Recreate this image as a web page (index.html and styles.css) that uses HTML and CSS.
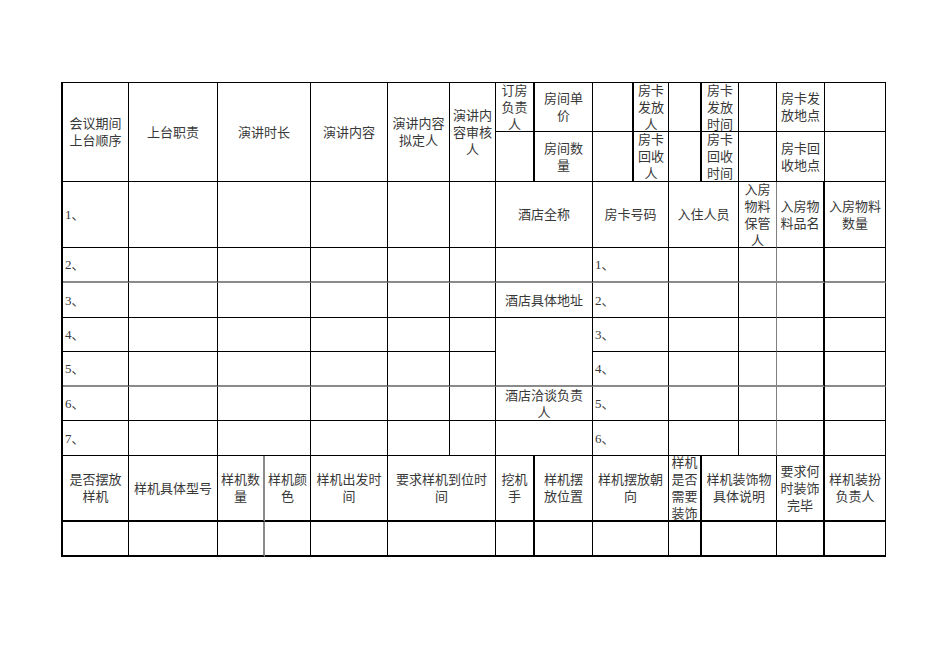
FILE: index.html
```html
<!DOCTYPE html>
<html lang="zh">
<head>
<meta charset="utf-8">
<title>会议安排表</title>
<link rel="stylesheet" href="styles.css">
</head>
<body>
<div class="sheet">
  <!-- row 1 -->
  <div class="cell h2">会议期间<br>上台顺序</div>
  <div class="cell h2">上台职责</div>
  <div class="cell h2 w2">演讲时长</div>
  <div class="cell h2">演讲内容</div>
  <div class="cell h2">演讲内容<br>拟定人</div>
  <div class="cell h2">演讲内<br>容审核<br>人</div>
  <div class="cell tr">订房<br>负责<br>人</div>
  <div class="cell">房间单<br>价</div>
  <div class="cell tr"></div>
  <div class="cell">房卡<br>发放<br>人</div>
  <div class="cell tr"></div>
  <div class="cell">房卡<br>发放<br>时间</div>
  <div class="cell"></div>
  <div class="cell">房卡发<br>放地点</div>
  <div class="cell"></div>
  <!-- row 2 -->
  <div class="cell tr"></div>
  <div class="cell">房间数<br>量</div>
  <div class="cell tr"></div>
  <div class="cell">房卡<br>回收<br>人</div>
  <div class="cell tr"></div>
  <div class="cell">房卡<br>回收<br>时间</div>
  <div class="cell"></div>
  <div class="cell">房卡回<br>收地点</div>
  <div class="cell"></div>
  <!-- row 3 -->
  <div class="cell num">1、</div>
  <div class="cell"></div>
  <div class="cell w2"></div>
  <div class="cell"></div>
  <div class="cell"></div>
  <div class="cell"></div>
  <div class="cell w2">酒店全称</div>
  <div class="cell w2">房卡号码</div>
  <div class="cell w2">入住人员</div>
  <div class="cell gr">入房<br>物料<br>保管<br>人</div>
  <div class="cell tr">入房物<br>料品名</div>
  <div class="cell">入房物料<br>数量</div>
  <!-- row 4 -->
  <div class="cell num gb">2、</div>
  <div class="cell gb"></div>
  <div class="cell w2 gb"></div>
  <div class="cell gb"></div>
  <div class="cell gb"></div>
  <div class="cell gb"></div>
  <div class="cell w2 gb"></div>
  <div class="cell w2 num gb">1、</div>
  <div class="cell w2 gb"></div>
  <div class="cell gr gb"></div>
  <div class="cell tr gb"></div>
  <div class="cell gb"></div>
  <!-- row 5 -->
  <div class="cell num">3、</div>
  <div class="cell"></div>
  <div class="cell w2"></div>
  <div class="cell"></div>
  <div class="cell"></div>
  <div class="cell"></div>
  <div class="cell w2">酒店具体地址</div>
  <div class="cell w2 num">2、</div>
  <div class="cell w2"></div>
  <div class="cell gr"></div>
  <div class="cell tr"></div>
  <div class="cell"></div>
  <!-- row 6 -->
  <div class="cell num">4、</div>
  <div class="cell"></div>
  <div class="cell w2"></div>
  <div class="cell"></div>
  <div class="cell"></div>
  <div class="cell"></div>
  <div class="cell w2 h2 gb"></div>
  <div class="cell w2 num">3、</div>
  <div class="cell w2"></div>
  <div class="cell gr"></div>
  <div class="cell tr"></div>
  <div class="cell"></div>
  <!-- row 7 -->
  <div class="cell num gb">5、</div>
  <div class="cell gb"></div>
  <div class="cell w2 gb"></div>
  <div class="cell gb"></div>
  <div class="cell gb"></div>
  <div class="cell gb"></div>
  <div class="cell w2 num gb">4、</div>
  <div class="cell w2 gb"></div>
  <div class="cell gr gb"></div>
  <div class="cell tr gb"></div>
  <div class="cell gb"></div>
  <!-- row 8 -->
  <div class="cell num">6、</div>
  <div class="cell"></div>
  <div class="cell w2"></div>
  <div class="cell"></div>
  <div class="cell"></div>
  <div class="cell"></div>
  <div class="cell w2">酒店洽谈负责<br>人</div>
  <div class="cell w2 num">5、</div>
  <div class="cell w2"></div>
  <div class="cell gr"></div>
  <div class="cell tr"></div>
  <div class="cell"></div>
  <!-- row 9 -->
  <div class="cell num">7、</div>
  <div class="cell"></div>
  <div class="cell w2"></div>
  <div class="cell"></div>
  <div class="cell"></div>
  <div class="cell"></div>
  <div class="cell w2"></div>
  <div class="cell w2 num">6、</div>
  <div class="cell w2"></div>
  <div class="cell gr"></div>
  <div class="cell tr"></div>
  <div class="cell"></div>
  <!-- row 10 -->
  <div class="cell tb">是否摆放<br>样机</div>
  <div class="cell tb">样机具体型号</div>
  <div class="cell tb gv">样机数<br>量</div>
  <div class="cell tb">样机颜<br>色</div>
  <div class="cell tb">样机出发时<br>间</div>
  <div class="cell tb w2">要求样机到位时<br>间</div>
  <div class="cell tb tr">挖机<br>手</div>
  <div class="cell tb">样机摆<br>放位置</div>
  <div class="cell tb w2">样机摆放朝<br>向</div>
  <div class="cell tb tr">样机<br>是否<br>需要<br>装饰</div>
  <div class="cell tb w2">样机装饰物<br>具体说明</div>
  <div class="cell tb tr">要求何<br>时装饰<br>完毕</div>
  <div class="cell tb">样机装扮<br>负责人</div>
  <!-- row 11 -->
  <div class="cell tb"></div>
  <div class="cell tb"></div>
  <div class="cell tb gv"></div>
  <div class="cell tb"></div>
  <div class="cell tb"></div>
  <div class="cell tb w2"></div>
  <div class="cell tb tr"></div>
  <div class="cell tb"></div>
  <div class="cell tb w2"></div>
  <div class="cell tb tr"></div>
  <div class="cell tb w2"></div>
  <div class="cell tb tr"></div>
  <div class="cell tb"></div>
</div>
</body>
</html>
```

FILE: styles.css
```css
html, body {
  margin: 0;
  padding: 0;
  background: #ffffff;
}

.sheet {
  display: grid;
  grid-template-columns: 66px 89px 47px 46px 77px 62px 46px 39px 58px 41px 35px 33px 37px 38px 48px 61px;
  grid-template-rows: 49px 50px 66px 35px 35px 34px 35px 34px 35px 66px 35px;
  width: max-content;
  margin: 82px 0 0 61px;
  border-top: 1px solid #000;
  border-left: 2px solid #000;
  font-family: "Liberation Serif", "Noto Sans CJK SC", serif;
  font-size: 13px;
  line-height: 17px;
  color: #383838;
}

.cell {
  box-sizing: border-box;
  border-right: 1px solid #000;
  border-bottom: 1px solid #000;
  display: flex;
  align-items: center;
  justify-content: center;
  text-align: center;
  white-space: nowrap;
  overflow: visible;
}

.num {
  justify-content: flex-start;
  text-align: left;
  padding-left: 2px;
}

.w2 { grid-column: span 2; }
.h2 { grid-row: span 2; }

.tr { border-right-width: 2px; }

.gr { border-right: 1px solid #7f7f7f; }

.gb { border-bottom: 2px solid #8a8a8a; }

.gv { border-right: 2px solid #8a8a8a; }

.tb { border-bottom-width: 2px; }
```
